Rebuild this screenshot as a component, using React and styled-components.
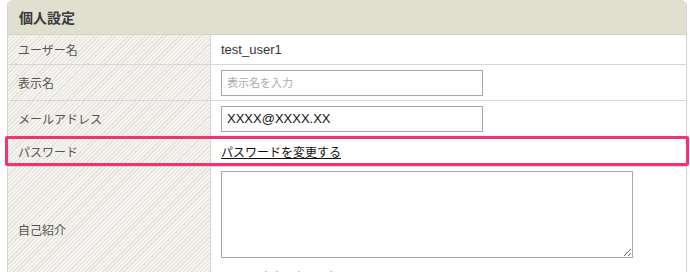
import React from "react";
import styled, { createGlobalStyle } from "styled-components";

const GlobalStyle = createGlobalStyle`
  body {
    margin: 0;
    background: #ffffff;
    font-family: "Liberation Sans", "Noto Sans CJK JP", sans-serif;
    overflow: hidden;
  }
`;

function App() {
    return (
        <Page>
            <GlobalStyle />
            <Panel>
                <Header>個人設定</Header>
                <Row>
                    <Label>ユーザー名</Label>
                    <Value>
                        <Plain>test_user1</Plain>
                    </Value>
                </Row>
                <Row tall>
                    <Label>表示名</Label>
                    <Value>
                        <TextInput placeholder="表示名を入力" />
                    </Value>
                </Row>
                <Row tall>
                    <Label>メールアドレス</Label>
                    <Value>
                        <TextInput defaultValue="XXXX@XXXX.XX" />
                    </Value>
                </Row>
                <Row>
                    <Label>パスワード</Label>
                    <Value>
                        <Link href="#">パスワードを変更する</Link>
                    </Value>
                </Row>
                <Row last>
                    <Label>自己紹介</Label>
                    <Value column>
                        <Area />
                        <Note>※200文字以内で入力</Note>
                    </Value>
                </Row>
            </Panel>
            {/* 注目枠 */}
            <Highlight />
        </Page>
    );
}

export default App;

const Page = styled.div`
  position: relative;
  padding-left: 7px;
  width: 690px;
  height: 272px;
  box-sizing: border-box;
`;

const Panel = styled.div`
  width: 680px;
  border: 1px solid #d4d4d4;
  border-top: none;
  border-radius: 5px 5px 0 0;
  box-sizing: border-box;
`;

const Header = styled.div`
  height: 35px;
  background: #e0dfd0;
  border-radius: 5px 5px 0 0;
  border-bottom: 1px solid #d2d1c4;
  box-sizing: border-box;
  padding-left: 11px;
  display: flex;
  align-items: center;
  font-family: "Noto Sans CJK JP", sans-serif;
  font-weight: bold;
  font-size: 14px;
  color: #3a3a3a;
`;

const Row = styled.div`
  display: grid;
  grid-template-columns: 203px 1fr;
  min-height: ${(props) => (props.last ? "124px" : props.tall ? "36px" : "30px")};
  border-bottom: ${(props) => (props.last ? "none" : "1px solid #d6d6d6")};
  box-sizing: border-box;
`;

const Label = styled.div`
  display: flex;
  align-items: center;
  padding-left: 10px;
  border-right: 1px solid #d6d6d6;
  font-family: "Noto Sans CJK JP", sans-serif;
  font-size: 12px;
  color: #555555;
  background-color: #f4f3ef;
  background-image: repeating-linear-gradient(
    -45deg,
    #f4f3ef 0px,
    #f4f3ef 2px,
    #e4e2da 2px,
    #e4e2da 3px
  );
`;

const Value = styled.div`
  display: flex;
  flex-direction: ${(props) => (props.column ? "column" : "row")};
  align-items: ${(props) => (props.column ? "flex-start" : "center")};
  padding: ${(props) => (props.column ? "4px 0 0 10px" : "0 0 0 10px")};
  background: #ffffff;
`;

const Plain = styled.span`
  font-size: 13px;
  color: #333333;
`;

const TextInput = styled.input`
  width: 262px;
  height: 26px;
  box-sizing: border-box;
  border: 1px solid #a8a8a8;
  padding: 0 5px;
  font-family: "Liberation Sans", "Noto Sans CJK JP", sans-serif;
  font-size: 13px;
  color: #111111;
  outline: none;

  &::placeholder {
    font-family: "Noto Sans CJK JP", sans-serif;
    font-size: 11px;
    color: #aaaaaa;
  }
`;

const Link = styled.a`
  font-family: "Noto Sans CJK JP", sans-serif;
  font-size: 12px;
  color: #111111;
  text-decoration: underline;
`;

const Area = styled.textarea`
  width: 412px;
  height: 87px;
  box-sizing: border-box;
  border: 1px solid #a8a8a8;
  resize: both;
  outline: none;
  margin: 0;
`;

const Note = styled.div`
  margin-top: 10px;
  padding-left: 10px;
  font-family: "Noto Sans CJK JP", sans-serif;
  font-size: 11px;
  color: #888888;
`;

const Highlight = styled.div`
  position: absolute;
  left: 5px;
  top: 136px;
  width: 684px;
  height: 30px;
  border: 3px solid #f2336e;
  border-radius: 2px;
  box-sizing: border-box;
  pointer-events: none;
`;
